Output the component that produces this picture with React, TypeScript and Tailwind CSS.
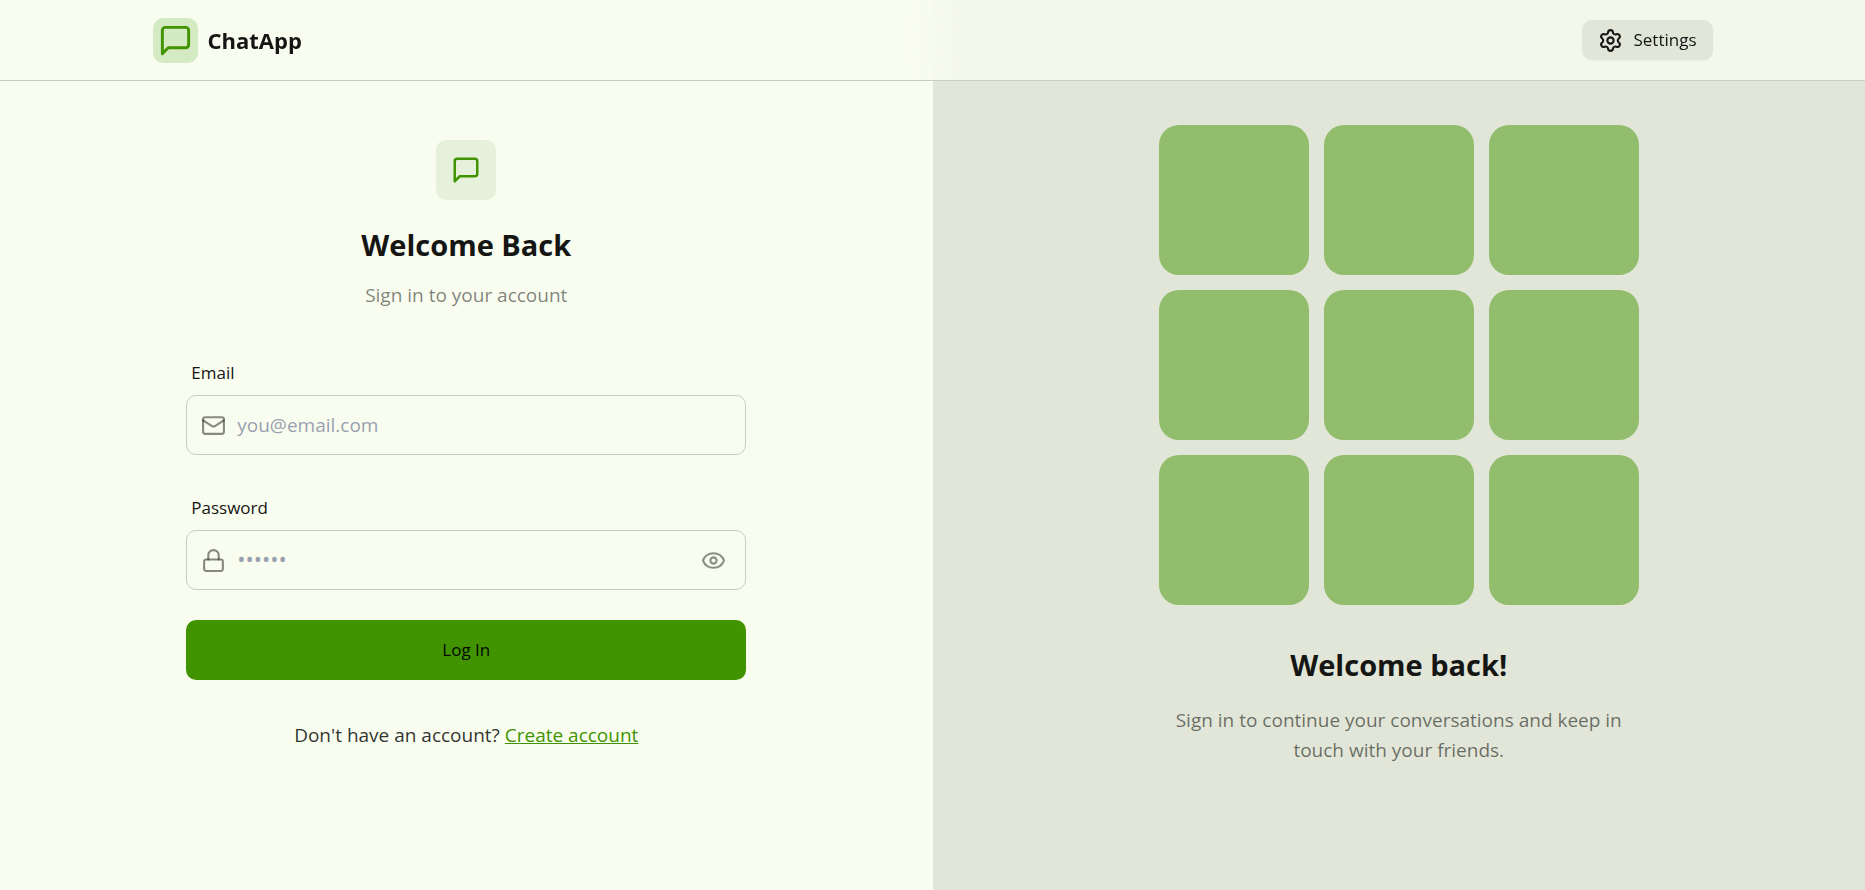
import { useState } from "react";
import { Eye, EyeOff, Lock, Mail, Settings } from "lucide-react";

function ChatIcon({ className }: { className: string }) {
  return (
    <svg
      viewBox="0 0 24 24"
      fill="none"
      stroke="currentColor"
      strokeWidth={2}
      strokeLinecap="round"
      strokeLinejoin="round"
      className={className}
      aria-hidden="true"
    >
      <path d="M21 15a2 2 0 0 1-2 2H7l-4 4V5a2 2 0 0 1 2-2h14a2 2 0 0 1 2 2z" />
    </svg>
  );
}

function Header() {
  return (
    <header className="fixed inset-x-0 top-0 z-10 border-b border-[#c8cdbf] bg-[#f9fdef]/80 backdrop-blur-lg">
      <div className="mx-auto flex h-20 max-w-[1600px] items-center justify-between px-5">
        <a href="#" className="flex items-center gap-2.5">
          <span className="flex size-[45px] items-center justify-center rounded-[10px] bg-[#d4eac3]">
            <ChatIcon className="size-[35px] text-[#419400]" />
          </span>
          <span className="text-[22px] font-bold">ChatApp</span>
        </a>
        <a
          href="#"
          className="flex h-10 items-center gap-2.5 rounded-[10px] bg-[#e1e6d8] px-4 text-[17px] font-medium shadow-xs"
        >
          <Settings className="size-[25px]" />
          Settings
        </a>
      </div>
    </header>
  );
}

const labelClass = "block px-[5px] py-2.5 text-[17px] leading-[25px] font-medium";
const fieldClass =
  "h-[60px] w-full rounded-[10px] border border-[#c8cdbf] bg-transparent pl-[50px] pr-[50px] text-[19px] placeholder:text-gray-400 focus:outline-2 focus:outline-[#419400]";

function LoginForm() {
  const [shown, setShown] = useState(false);
  return (
    <form className="flex flex-col gap-[30px]" onSubmit={(e) => e.preventDefault()}>
      <div>
        <label htmlFor="email" className={labelClass}>
          Email
        </label>
        <div className="relative">
          <Mail className="absolute inset-y-0 left-[15px] my-auto size-[25px] text-[#151614]/50" />
          <input id="email" type="email" placeholder="you@email.com" className={fieldClass} />
        </div>
      </div>
      <div>
        <label htmlFor="password" className={labelClass}>
          Password
        </label>
        <div className="relative">
          <Lock className="absolute inset-y-0 left-[15px] my-auto size-[25px] text-[#151614]/50" />
          <input
            id="password"
            type={shown ? "text" : "password"}
            placeholder="••••••"
            className={`${fieldClass} placeholder:text-[22px]`}
          />
          <button
            type="button"
            aria-label="Toggle password visibility"
            onClick={() => setShown(!shown)}
            className="absolute inset-y-0 right-0 flex items-center px-5 text-[#8a8d84]"
          >
            {shown ? <EyeOff className="size-[25px]" /> : <Eye className="size-[25px]" />}
          </button>
        </div>
      </div>
      <button
        type="submit"
        className="h-[60px] w-full rounded-[10px] bg-[#419400] text-[17px] font-medium text-[#010800]"
      >
        Log In
      </button>
    </form>
  );
}

export default function App() {
  return (
    <div className="bg-[#f9fdef] font-['Open_Sans','Noto_Sans',sans-serif] text-[#151614]">
      <Header />
      <main className="grid min-h-screen lg:grid-cols-2">
        <section className="flex items-center justify-center px-5 pt-20 lg:pt-0">
          <div className="w-full max-w-[560px]">
            <div className="flex flex-col items-center text-center">
              <span className="flex size-[60px] items-center justify-center rounded-[10px] bg-[#e5f1da]">
                <ChatIcon className="size-[30px] text-[#419400]" />
              </span>
              <h1 className="mt-[25px] text-[29px] leading-10 font-bold">Welcome Back</h1>
              <p className="mt-[15px] mb-10 text-[19px] leading-[30px] text-[#151614]/55">
                Sign in to your account
              </p>
            </div>
            <LoginForm />
            <p className="mt-10 text-center text-[19px] leading-[30px] text-[#151614]/90">
              Don't have an account?{" "}
              <a href="#" className="text-[#419400] underline">
                Create account
              </a>
            </p>
          </div>
        </section>
        <section className="hidden items-center justify-center bg-[#e1e6d8] lg:flex">
          <div className="w-full max-w-[480px] text-center">
            <div className="mb-10 grid grid-cols-3 gap-[15px]">
              {Array.from({ length: 9 }, (_, i) => (
                <div key={i} className="aspect-square rounded-[20px] bg-[#419400]/50" />
              ))}
            </div>
            <h2 className="mb-5 text-[29px] leading-10 font-bold">Welcome back!</h2>
            <p className="text-[19px] leading-[30px] text-[#151614]/60">
              Sign in to continue your conversations and keep in touch with your friends.
            </p>
          </div>
        </section>
      </main>
    </div>
  );
}
